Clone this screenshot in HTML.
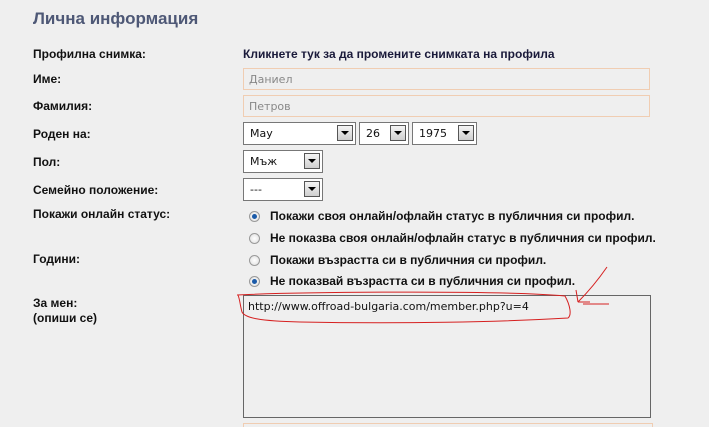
<!DOCTYPE html>
<html><head><meta charset="utf-8"><style>
body{margin:0;width:709px;height:426px;background:#efefef;font-family:"Liberation Sans","DejaVu Sans",sans-serif;position:relative;overflow:hidden}
.a{position:absolute;white-space:nowrap}
.t{left:33px;top:9px;font-size:17px;font-weight:bold;color:#4e5876}
.l{left:33px;font-size:12px;font-weight:bold;color:#111}
.in{position:absolute;left:243px;width:405px;height:20px;border:1px solid #f0cdb2;background:#efefef;font-size:11px;color:#888;font-family:"DejaVu Sans",sans-serif}
.in span{position:absolute;left:5px;top:4px}
.s{position:absolute;height:21px;border:1px solid #777;background:#fff;font-size:11px;color:#111;font-family:"DejaVu Sans",sans-serif}
.s span{position:absolute;left:6px;top:4px}
.s i{position:absolute;right:2px;top:2px;width:16px;height:16px;border:1px solid #555;background:linear-gradient(#f4f4f4,#cfcfcf);box-sizing:border-box}
.s i:after{content:"";position:absolute;left:3px;top:5px;border-left:4px solid transparent;border-right:4px solid transparent;border-top:4px solid #000}
.r{position:absolute;left:249px;width:11px;height:11px;border-radius:50%;border:1px solid #999;background:radial-gradient(#fff,#ddd);box-sizing:border-box}
.r.on:after{content:"";position:absolute;left:2px;top:2px;width:5px;height:5px;border-radius:50%;background:#1a5aa8}
.rt{left:270px;font-size:12px;font-weight:bold;color:#111}
</style></head><body>
<div class="a t">Лична информация</div>
<div class="a l" style="top:47px">Профилна снимка:</div>
<div class="a" style="left:243px;top:47px;font-size:12px;font-weight:bold;color:#1a1a3a">Кликнете тук за да промените снимката на профила</div>
<div class="a l" style="top:72px">Име:</div>
<div class="in" style="top:68px"><span>Даниел</span></div>
<div class="a l" style="top:99px">Фамилия:</div>
<div class="in" style="top:95px"><span>Петров</span></div>
<div class="a l" style="top:127px">Роден на:</div>
<div class="s" style="left:243px;top:122px;width:111px"><span>May</span><i></i></div>
<div class="s" style="left:359px;top:122px;width:48px"><span>26</span><i></i></div>
<div class="s" style="left:412px;top:122px;width:63px"><span>1975</span><i></i></div>
<div class="a l" style="top:155px">Пол:</div>
<div class="s" style="left:243px;top:150px;width:78px"><span>Мъж</span><i></i></div>
<div class="a l" style="top:183px">Семейно положение:</div>
<div class="s" style="left:243px;top:178px;width:78px"><span>---</span><i></i></div>
<div class="a l" style="top:207px">Покажи онлайн статус:</div>
<div class="r on" style="top:211px"></div><div class="a rt" style="top:209px">Покажи своя онлайн/офлайн статус в публичния си профил.</div>
<div class="r" style="top:233px"></div><div class="a rt" style="top:231px">Не показва своя онлайн/офлайн статус в публичния си профил.</div>
<div class="a l" style="top:252px">Години:</div>
<div class="r" style="top:255px"></div><div class="a rt" style="top:253px">Покажи възрастта си в публичния си профил.</div>
<div class="r on" style="top:276px"></div><div class="a rt" style="top:274px">Не показвай възрастта си в публичния си профил.</div>
<div class="a l" style="top:296px;line-height:15px">За мен:<br>(опиши се)</div>
<div class="a" style="left:243px;top:295px;width:406px;height:121px;border:1px solid #666;background:#efefef"></div>
<div class="a" style="left:248px;top:300px;font-size:11px;color:#111;font-family:'DejaVu Sans',sans-serif">http://www.offroad-bulgaria.com/member.php?u=4</div>
<div class="a" style="left:243px;top:423px;width:408px;height:3px;border:1px solid #f0cdb2;border-bottom:none"></div>
<svg class="a" style="left:0;top:0" width="709" height="426"><g fill="none" stroke="#d62020" stroke-width="1">
<path d="M237 295 C300 292 500 290 565 296 C570 305 572 315 568 318 C500 322 400 324 300 322 C260 321 245 318 242 312 C240 305 240 300 238 295"/>
<path d="M607 267 C598 280 588 292 578 302 M578 302 L576 290 M578 302 L590 302"/>
<path d="M583 304 L609 304"/></g></svg>
</body></html>
